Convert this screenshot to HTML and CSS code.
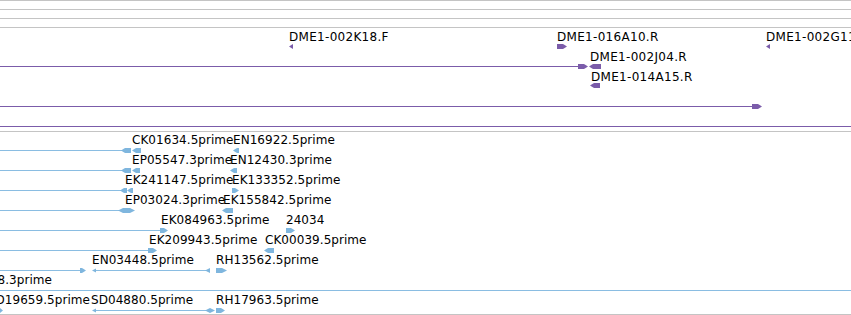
FILE: index.html
```html
<!DOCTYPE html>
<html lang="en">
<head>
    <meta charset="UTF-8">
    <title>Tracks</title>
    <link rel="stylesheet" href="styles.css">
</head>
<body>
    <div class="panel">
        <div class="band"></div>
        <div class="band"></div>
        <div class="band"></div>

        <!-- clone ends track -->
        <div class="track track-ends">
            <svg width="851" height="103" class="canvas">
                <text x="289" y="13">DME1-002K18.F</text>
                <polygon points="289,18.5 293,16 293,21" />

                <text x="557" y="13">DME1-016A10.R</text>
                <polygon points="557,16 563,16 567,18.5 563,21 557,21" />

                <text x="766" y="13">DME1-002G11.R</text>
                <polygon points="766,18.5 770,16 770,21" />

                <line x1="0" y1="38.5" x2="580" y2="38.5" />
                <polygon points="578,36 584,36 588,38.5 584,41 578,41" />

                <text x="590" y="33">DME1-002J04.R</text>
                <polygon points="589,38.5 593,36 601,36 601,41 593,41" />

                <text x="591" y="53">DME1-014A15.R</text>
                <polygon points="590,57.5 594,55 600,55 600,60 594,60" />

                <line x1="0" y1="78.5" x2="754" y2="78.5" />
                <polygon points="752,76 758,76 762,78.5 758,81 752,81" />

                <line x1="0" y1="98.5" x2="851" y2="98.5" />
            </svg>
        </div>

        <!-- ESTs track -->
        <div class="track track-ests">
            <svg width="851" height="182" class="canvas">
                <!-- row 1 -->
                <line x1="0" y1="18.5" x2="122" y2="18.5" />
                <polygon points="121,18.5 125,16 131,16 131,21 125,21" />
                <polygon points="132,18.5 136,16 141,16 141,21 136,21" />
                <text x="132" y="12">CK01634.5prime</text>
                <text x="233" y="12">EN16922.5prime</text>
                <polygon points="233,18.5 237,16 239,16 239,21 237,21" />

                <!-- row 2 -->
                <line x1="0" y1="38.5" x2="122" y2="38.5" />
                <polygon points="121,38.5 125,36 131,36 131,41 125,41" />
                <polygon points="132,38.5 136,36 140,36 140,41 136,41" />
                <text x="132" y="32">EP05547.3prime</text>
                <text x="230" y="32">EN12430.3prime</text>
                <polygon points="230,38.5 234,36 237,36 237,41 234,41" />

                <!-- row 3 -->
                <line x1="0" y1="58.5" x2="121" y2="58.5" />
                <polygon points="120,58.5 124,56 127,56 127,61 124,61" />
                <polygon points="127,58.5 131,56 133,56 133,61 131,61" />
                <text x="125" y="52">EK241147.5prime</text>
                <text x="232" y="52">EK133352.5prime</text>
                <polygon points="232,56 235,56 239,58.5 235,61 232,61" />

                <!-- row 4 -->
                <line x1="0" y1="78.5" x2="119" y2="78.5" />
                <polygon points="118,78.5 123,76 130,76 135,78.5 130,81 123,81" />
                <text x="125" y="72">EP03024.3prime</text>
                <text x="223" y="72">EK155842.5prime</text>
                <polygon points="222,78.5 226,76 233,76 233,81 226,81" />

                <!-- row 5 -->
                <line x1="0" y1="98.5" x2="161" y2="98.5" />
                <polygon points="160,96 164,96 168,98.5 164,101 160,101" />
                <text x="161" y="92">EK084963.5prime</text>
                <text x="286" y="92">24034</text>
                <polygon points="286,96 291,96 295,98.5 291,101 286,101" />

                <!-- row 6 -->
                <line x1="0" y1="118.5" x2="149" y2="118.5" />
                <polygon points="148,116 153,116 157,118.5 153,121 148,121" />
                <text x="149" y="112">EK209943.5prime</text>
                <text x="265" y="112">CK00039.5prime</text>
                <polygon points="264,118.5 268,116 274,116 274,121 268,121" />

                <!-- row 7 -->
                <line x1="0" y1="138.5" x2="82" y2="138.5" />
                <polygon points="80,136 82,136 86,138.5 82,141 80,141" />
                <text x="92" y="132">EN03448.5prime</text>
                <line x1="93" y1="138.5" x2="209" y2="138.5" />
                <polygon points="92,138.5 96,136.5 96,140.5" />
                <polygon points="205,138.5 210,136 210,141" />
                <text x="216" y="132">RH13562.5prime</text>
                <polygon points="216,136 222,136 227,138.5 222,141 216,141" />

                <!-- row 8 -->
                <text x="52" y="152" class="end">8.3prime</text>
                <line x1="0" y1="158.5" x2="851" y2="158.5" />

                <!-- row 9 -->
                <text x="90" y="172" class="end">LD19659.5prime</text>
                <polygon points="0,176 0,181 3,178.5" />
                <text x="91" y="172">SD04880.5prime</text>
                <line x1="93" y1="178.5" x2="209" y2="178.5" />
                <polygon points="92,178.5 96,176.5 96,180.5" />
                <polygon points="205,178.5 210,176 210,181" />
                <polygon points="210,176 215,178.5 210,181" />
                <text x="216" y="172">RH17963.5prime</text>
                <polygon points="216,176 221,176 225,178.5 221,181 216,181" />
            </svg>
        </div>
    </div>
</body>
</html>
```

FILE: styles.css
```css
body {
    margin: 0;
    background: #ffffff;
    overflow: hidden;
    font-family: 'DejaVu Sans', sans-serif;
}
.panel {
    width: 851px;
    height: 315px;
    overflow: hidden;
}
.band {
    height: 8px;
    border-top: 1px solid #c4c4c4;
}
.track {
    border-top: 1px solid #c4c4c4;
}
.track-ends {
    height: 103px;
}
.track-ests {
    height: 182px;
    border-bottom: 1px solid #c4c4c4;
}
.canvas {
    display: block;
}
.canvas text {
    font-family: 'DejaVu Sans', sans-serif;
    font-size: 12px;
    fill: #000000;
}
.track-ends text {
    letter-spacing: 0.3px;
}
.track-ests text {
    letter-spacing: 0.05px;
}
.canvas text.end {
    text-anchor: end;
}
.canvas line {
    stroke-width: 1;
    shape-rendering: crispEdges;
}
.track-ends polygon {
    fill: #7b5caa;
}
.track-ends line {
    stroke: #7b5caa;
}
.track-ests polygon {
    fill: #7fb6de;
}
.track-ests line {
    stroke: #8abde2;
}
```
